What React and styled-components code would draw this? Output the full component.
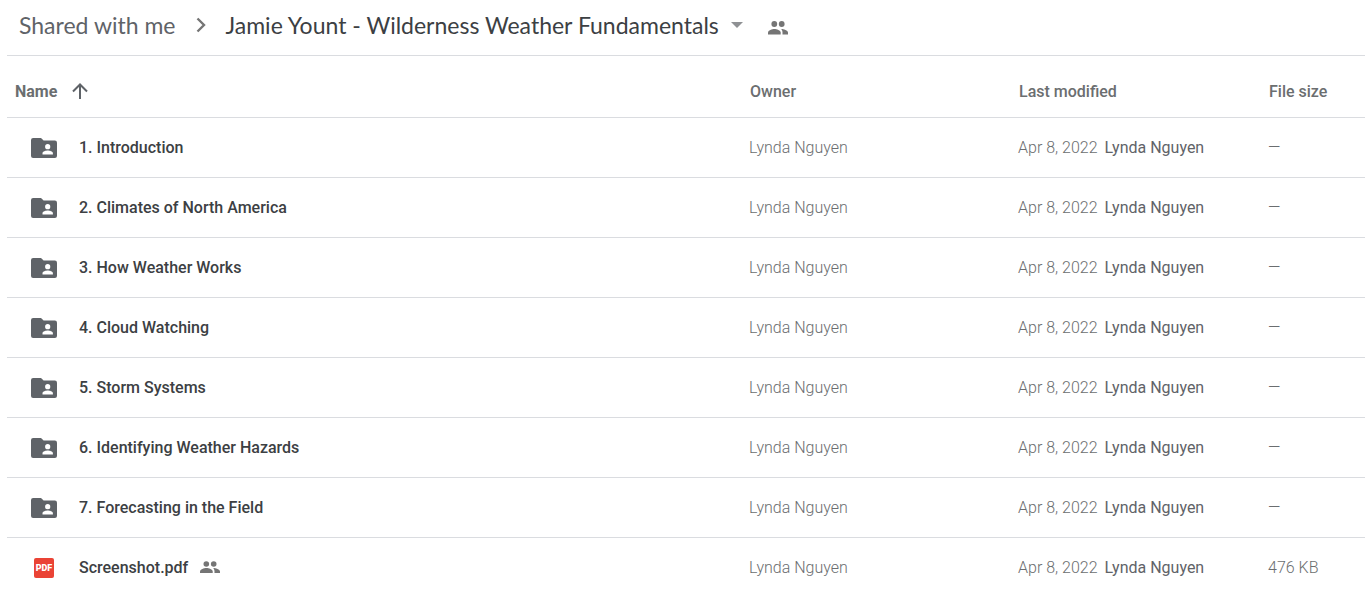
import React from 'react'
import styled, { createGlobalStyle } from 'styled-components';

const folders = [
    '1. Introduction',
    '2. Climates of North America',
    '3. How Weather Works',
    '4. Cloud Watching',
    '5. Storm Systems',
    '6. Identifying Weather Hazards',
    '7. Forecasting in the Field',
];

const files = [
    ...folders.map((name) => ({ name, type: 'folder', size: '—' })),
    { name: 'Screenshot.pdf', type: 'pdf', size: '476 KB', shared: true },
];

function FolderIcon() {
    return (
        <Icon width="26" height="20" viewBox="0 0 26 20" fill="#5f6368" aria-hidden="true">
            <path d="M2.5 0H10l2.6 2.5h10.9A2.3 2.3 0 0 1 26 4.8v12.7a2.4 2.4 0 0 1-2.5 2.5h-21A2.4 2.4 0 0 1 0 17.5v-15A2.4 2.4 0 0 1 2.5 0z" />
            <circle cx="16.7" cy="8.7" r="2.6" fill="#fff" />
            <path d="M11.5 16.5v-1.400c0-1.700 3.400-2.600 5.200-2.600s5.200.9 5.200 2.600v1.400z" fill="#fff" />
        </Icon>
    )
}

function PdfIcon() {
    return (
        <Icon width="20" height="20" viewBox="0 0 20 20" aria-hidden="true">
            <rect width="20" height="20" rx="2" fill="#ea4335" />
            <PdfText x="10" y="13" textAnchor="middle">PDF</PdfText>
        </Icon>
    )
}

function PeopleIcon() {
    return (
        <Icon width="20" height="14" viewBox="0 0 20 14" fill="#757575" aria-hidden="true">
            <circle cx="6.3" cy="3" r="2.9" />
            <circle cx="13.7" cy="3" r="2.9" />
            <path d="M0 13.500v-2c0-2.300 4.200-3.500 6.400-3.500s6.300 1.200 6.300 3.500v2z" />
            <path d="M13.200 8c2.400.2 6.800 1.300 6.800 3.500v2h-5.500v-2c0-1.500-.5-2.600-1.300-3.500z" />
        </Icon>
    )
}

function SharedIcon() {
    return (
        <Icon width="20" height="12" viewBox="0 0 20 12" fill="#757575" aria-hidden="true">
            <circle cx="6.3" cy="3" r="2.8" />
            <circle cx="13.7" cy="3" r="2.8" />
            <path d="M0 12v-1.500c0-2.300 4-3.500 6.400-3.500s6.300 1.200 6.300 3.500V12z" />
            <path d="M13.200 7c2.400.2 6.800 1.200 6.800 3.500V12h-5.500v-1.500c0-1.500-.5-2.600-1.300-3.500z" />
        </Icon>
    )
}

function App() {
    return (
        <Page>
            <GlobalStyle />
            <Breadcrumb aria-label="Breadcrumb">
                <ParentLink href="#shared">Shared with me</ParentLink>
                <Chevron width="10" height="16" viewBox="0 0 10 16" aria-hidden="true">
                    <path d="M1.500 1.500 8 8l-6.500 6.500" fill="none" stroke="#757575" strokeWidth="2.400" />
                </Chevron>
                <FolderButton type="button">
                    Jamie Yount - Wilderness Weather Fundamentals
                    <Icon width="12" height="6" viewBox="0 0 12 6" aria-hidden="true">
                        <path d="M0 0h12L6 6z" fill="#8f9194" />
                    </Icon>
                </FolderButton>
                <IconButton type="button" aria-label="Manage people">
                    <PeopleIcon />
                </IconButton>
            </Breadcrumb>
            <Table>
                <thead>
                    <tr>
                        <HeadCell>
                            <SortButton type="button">
                                Name
                                <Icon width="16" height="16" viewBox="0 0 16 16" aria-hidden="true">
                                    <path d="M8 16V1.500M1 8.500l7-7 7 7" fill="none" stroke="#5f6368" strokeWidth="2" />
                                </Icon>
                            </SortButton>
                        </HeadCell>
                        <HeadCell $width="269px">Owner</HeadCell>
                        <HeadCell $width="250px">Last modified</HeadCell>
                        <HeadCell $width="97px">File size</HeadCell>
                    </tr>
                </thead>
                <tbody>
                    {files.map((file) => (
                        <tr key={file.name}>
                            <Cell>
                                <NameWrapper>
                                    <IconSlot>{file.type === 'pdf' ? <PdfIcon /> : <FolderIcon />}</IconSlot>
                                    <FileName>{file.name}</FileName>
                                    {file.shared && <SharedIcon />}
                                </NameWrapper>
                            </Cell>
                            <Cell>Lynda Nguyen</Cell>
                            <Cell>
                                <Modified>
                                    <span>Apr 8, 2022</span>
                                    <Editor>Lynda Nguyen</Editor>
                                </Modified>
                            </Cell>
                            <Cell>{file.size}</Cell>
                        </tr>
                    ))}
                </tbody>
            </Table>
        </Page>
    )
}

const GlobalStyle = createGlobalStyle`
    body{
      margin: 0;
      background: #fff;
      overflow-x: hidden;
    }
    *{
      box-sizing: border-box;
    }
    button{
      border: 0;
      padding: 0;
      background: none;
      font: inherit;
      color: inherit;
      cursor: pointer;
    }
`;
const Page = styled.main`
    padding-left: 7px;
    font-family: Roboto, sans-serif;
    font-size: 16px;
    color: #6b6e70;
`;
const Icon = styled.svg`
    display: block;
    flex: none;
`;
const Breadcrumb = styled.nav`
    display: flex;
    align-items: center;
    height: 56px;
    padding: 0 12px 6px;
    border-bottom: 1px solid #dadce0;
    font-family: Lato, sans-serif;
    font-size: 23px;
    white-space: nowrap;
`;
const ParentLink = styled.a`
    color: #5f6368;
    text-decoration: none;
`;
const Chevron = styled(Icon)`
    margin: 0 20px;
`;
const FolderButton = styled.button`
    && {
      display: flex;
      align-items: center;
      gap: 12px;
      color: #3c4043;
    }
`;
const IconButton = styled.button`
    && {
      margin-left: 25px;
      padding-top: 6px;
    }
`;
const Table = styled.table`
    width: 100%;
    table-layout: fixed;
    border-collapse: collapse;
`;
const HeadCell = styled.th`
    width: ${(props) => props.$width || 'auto'};
    height: 61px;
    padding: 10px 0 0 1px;
    border-bottom: 1px solid #dadce0;
    font-weight: 500;
    text-align: left;
    white-space: nowrap;
`;
const SortButton = styled.button`
    && {
      display: flex;
      align-items: center;
      gap: 15px;
      padding-left: 7px;
      font-weight: 700;
    }
`;
const Cell = styled.td`
    height: 60px;
    padding: 0;
    border-bottom: 1px solid #dadce0;
    font-weight: 300;
    white-space: nowrap;
`;
const NameWrapper = styled.div`
    display: flex;
    align-items: center;
`;
const IconSlot = styled.span`
    display: flex;
    justify-content: center;
    width: 26px;
    margin: 0 22px 0 24px;
    padding-top: 2px;
`;
const FileName = styled.span`
    margin-right: 12px;
    font-weight: 500;
    color: #3c4043;
`;
const Modified = styled.div`
    display: flex;
    gap: 7px;
`;
const Editor = styled.span`
    font-weight: 400;
    color: #5f6368;
`;
const PdfText = styled.text`
    font-family: Roboto, sans-serif;
    font-size: 9px;
    font-weight: 900;
    fill: #fff;
`;

export default App
